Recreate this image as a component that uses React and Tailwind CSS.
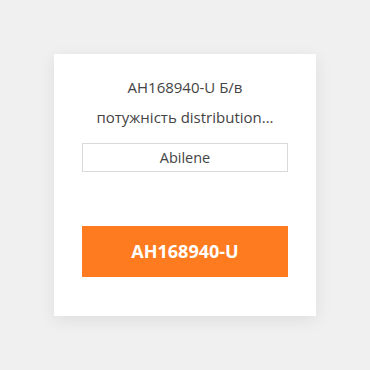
import React from 'react';

export default function App() {
  return (
    <div className="w-[370px] h-[370px] bg-[#f0f0f0] flex items-center justify-center" style={{ fontFamily: '"Open Sans", "Noto Sans", sans-serif' }}>
      <div className="w-[262px] h-[262px] bg-white shadow-[0_4px_16px_rgba(0,0,0,0.08)] flex flex-col items-center px-7 pt-[18px]">
        <p className="text-[15px] leading-[30px] text-[#444] text-center">
          AH168940-U Б/в
          <br />
          потужність distribution...
        </p>
        <div className="mt-[11px] w-full h-[29px] border border-[#d9d9d9] flex items-center justify-center text-[14.5px] text-[#444]">
          Abilene
        </div>
        <button className="mt-[54px] w-full h-[51px] bg-[#ff7b20] text-white text-[18px] font-bold">
          AH168940-U
        </button>
      </div>
    </div>
  );
}
